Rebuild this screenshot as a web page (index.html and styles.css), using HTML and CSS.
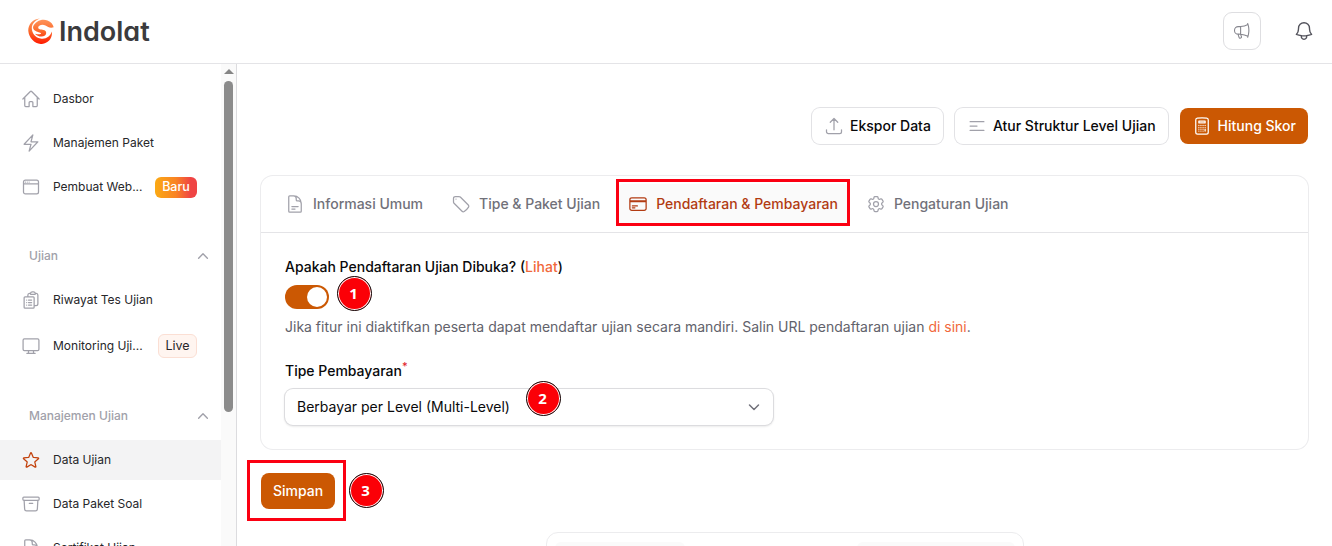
FILE: index.html
```html
<!DOCTYPE html>
<html lang="id">
	<head>
		<meta charset="utf-8">
		<meta name="viewport" content="width=device-width, initial-scale=1">
		<title>Data Ujian - Indolat</title>
		<link rel="stylesheet" href="styles.css">
	</head>
	<body>
		<header class="topbar">
			<a class="logo">
				<svg class="logo-mark" viewBox="0 0 26 26">
					<defs>
						<linearGradient id="flame" gradientUnits="userSpaceOnUse" x1="0" y1="0" x2="0" y2="26">
							<stop offset="0" stop-color="#ff9a62"/>
							<stop offset=".5" stop-color="#fb6b2c"/>
							<stop offset="1" stop-color="#ff1a00"/>
						</linearGradient>
					</defs>
					<g fill="url(#flame)">
						<path d="M12 .5C4 1 0 7 .3 13C1 20 7 26.400 14 26C20 25.500 24.500 21 24 13.500C22 18.500 18 21.500 12.500 20.500C7 19.500 3.800 15 3.800 10C3.800 6 7 2.500 12 .5Z"/>
						<path d="M5 9C7 3.200 14 .5 19.500 2.500C23 3.800 25 6.500 25.700 9.200C22 10.500 20 8.800 17.500 7.500C14 5.800 10 7.500 10.200 9.800C10.500 11.800 14 11.300 16.500 12.300C19.500 13.800 18.500 18.500 13.500 18.600C11 18.700 8.500 17.500 7 15.700C10 16.700 13.500 16.500 13 15.300C12 14 5 14 5 9Z"/>
					</g>
				</svg>
				<span class="logo-text">Indolat</span>
			</a>
			<div class="topbar-actions">
				<button class="announce">
					<svg class="icon" viewBox="0 0 24 24"><path d="M10.340 15.840c-.688-.06-1.386-.09-2.090-.09H7.500a4.500 4.500 0 1 1 0-9h.75c.704 0 1.402-.03 2.090-.09m0 9.180c.253.962.584 1.892.985 2.783.247.550.060 1.210-.463 1.511l-.657.380c-.551.318-1.260.117-1.527-.461a20.845 20.845 0 0 1-1.440-4.282m3.102.069V6.660m0 9.180a23.848 23.848 0 0 1 8.835 2.535M10.340 6.660a23.847 23.847 0 0 0 8.835-2.535m0 0A23.740 23.740 0 0 0 18.795 3m.380 1.125a23.910 23.910 0 0 1 1.014 5.395m-1.014 8.855c-.118.380-.245.754-.380 1.125m.380-1.125a23.910 23.910 0 0 0 1.014-5.395m0-3.460a24.347 24.347 0 0 1 0 3.460"/></svg>
				</button>
				<button class="bell">
					<svg class="icon" viewBox="0 0 24 24"><path d="M14.857 17.082a23.848 23.848 0 0 0 5.454-1.310A8.967 8.967 0 0 1 18 9.750V9A6 6 0 0 0 6 9v.75a8.967 8.967 0 0 1-2.312 6.022c1.733.640 3.560 1.085 5.455 1.310m5.714 0a24.255 24.255 0 0 1-5.714 0m5.714 0a3 3 0 1 1-5.714 0"/></svg>
				</button>
			</div>
		</header>

		<div class="layout">
			<aside class="sidebar">
				<nav class="nav">
					<ul>
						<li class="nav-item">
							<svg class="icon" viewBox="0 0 24 24"><path d="m2.250 12 8.954-8.955c.440-.439 1.152-.439 1.591 0L21.750 12M4.500 9.750v10.125c0 .621.504 1.125 1.125 1.125H9.750v-4.875c0-.621.504-1.125 1.125-1.125h2.250c.621 0 1.125.504 1.125 1.125V21h4.125c.621 0 1.125-.504 1.125-1.125V9.750"/></svg>
							<span class="nav-label">Dasbor</span>
						</li>
						<li class="nav-item">
							<svg class="icon" viewBox="0 0 24 24"><path d="m3.750 13.500 10.500-11.250L12 10.500h8.250L9.750 21.750 12 13.500H3.750Z"/></svg>
							<span class="nav-label">Manajemen Paket</span>
						</li>
						<li class="nav-item">
							<svg class="icon" viewBox="0 0 24 24"><path d="M3 8.250V18a2.250 2.250 0 0 0 2.250 2.250h13.500A2.250 2.250 0 0 0 21 18V8.250m-18 0V6a2.250 2.250 0 0 1 2.250-2.250h13.500A2.250 2.250 0 0 1 21 6v2.250m-18 0h18M5.250 6h.008v.008H5.250V6ZM7.500 6h.008v.008H7.500V6Zm2.250 0h.008v.008H9.750V6Z"/></svg>
							<span class="nav-label">Pembuat Web...</span>
							<span class="badge badge-new">Baru</span>
						</li>
					</ul>
					<div class="nav-group">
						<span>Ujian</span>
						<svg class="icon" viewBox="0 0 24 24"><path d="m4.500 15.750 7.500-7.500 7.500 7.500"/></svg>
					</div>
					<ul>
						<li class="nav-item">
							<svg class="icon" viewBox="0 0 24 24"><path d="M9 12h3.750M9 15h3.750M9 18h3.750m3 .75H18a2.250 2.250 0 0 0 2.250-2.250V6.108c0-1.135-.845-2.098-1.976-2.192a48.424 48.424 0 0 0-1.123-.080m-5.801 0c-.065.210-.100.433-.100.664 0 .414.336.750.750.750h4.500a.750.750 0 0 0 .750-.750 2.250 2.250 0 0 0-.100-.664m-5.800 0A2.251 2.251 0 0 1 13.500 2.250H15c1.012 0 1.867.668 2.150 1.586m-5.800 0c-.376.023-.750.050-1.124.080C9.095 4.010 8.250 4.973 8.250 6.108V8.250m0 0H4.875c-.621 0-1.125.504-1.125 1.125v11.250c0 .621.504 1.125 1.125 1.125h9.750c.621 0 1.125-.504 1.125-1.125V9.375c0-.621-.504-1.125-1.125-1.125H8.250ZM6.750 12h.008v.008H6.750V12Zm0 3h.008v.008H6.750V15Zm0 3h.008v.008H6.750V18Z"/></svg>
							<span class="nav-label">Riwayat Tes Ujian</span>
						</li>
						<li class="nav-item tall">
							<svg class="icon" viewBox="0 0 24 24"><path d="M4 3.500h16a1.500 1.500 0 0 1 1.500 1.500v11a1.500 1.500 0 0 1-1.500 1.500H4A1.500 1.500 0 0 1 2.500 16V5A1.500 1.500 0 0 1 4 3.500ZM9 17.500v3m6-3v3M7 20.700h10"/></svg>
							<span class="nav-label">Monitoring Uji...</span>
							<span class="badge badge-live">Live</span>
						</li>
					</ul>
					<div class="nav-group">
						<span>Manajemen Ujian</span>
						<svg class="icon" viewBox="0 0 24 24"><path d="m4.500 15.750 7.500-7.500 7.500 7.500"/></svg>
					</div>
					<ul>
						<li class="nav-item active">
							<svg class="icon" viewBox="0 0 24 24"><path d="M11.480 3.499a.562.562 0 0 1 1.040 0l2.125 5.111a.563.563 0 0 0 .475.345l5.518.442c.499.040.701.663.321.988l-4.204 3.602a.563.563 0 0 0-.182.557l1.285 5.385a.562.562 0 0 1-.840.610l-4.725-2.885a.562.562 0 0 0-.586 0L6.982 20.540a.562.562 0 0 1-.840-.610l1.285-5.386a.562.562 0 0 0-.182-.557l-4.204-3.602a.562.562 0 0 1 .321-.988l5.518-.442a.563.563 0 0 0 .475-.345L11.480 3.500Z"/></svg>
							<span class="nav-label">Data Ujian</span>
						</li>
						<li class="nav-item">
							<svg class="icon" viewBox="0 0 24 24"><path d="m20.250 7.500-.625 10.632a2.250 2.250 0 0 1-2.247 2.118H6.622a2.250 2.250 0 0 1-2.247-2.118L3.750 7.500M10 11.250h4M3.375 7.500h17.250c.621 0 1.125-.504 1.125-1.125v-1.500c0-.621-.504-1.125-1.125-1.125H3.375c-.621 0-1.125.504-1.125 1.125v1.500c0 .621.504 1.125 1.125 1.125Z"/></svg>
							<span class="nav-label">Data Paket Soal</span>
						</li>
						<li class="nav-item">
							<svg class="icon" viewBox="0 0 24 24"><path d="M19.500 14.250v-2.625a3.375 3.375 0 0 0-3.375-3.375h-1.500A1.125 1.125 0 0 1 13.500 7.125v-1.500a3.375 3.375 0 0 0-3.375-3.375H8.250m2.250 0H5.625c-.621 0-1.125.504-1.125 1.125v17.250c0 .621.504 1.125 1.125 1.125h12.750c.621 0 1.125-.504 1.125-1.125V11.250a9 9 0 0 0-9-9Z"/></svg>
							<span class="nav-label">Sertifikat Ujian</span>
						</li>
					</ul>
				</nav>
				<div class="scrollbar">
					<span class="scroll-arrow"></span>
					<span class="scroll-thumb"></span>
				</div>
			</aside>

			<main class="content">
				<div class="actions">
					<button class="btn">
						<svg class="icon" viewBox="0 0 24 24"><path d="M3 16.500v2.250A2.250 2.250 0 0 0 5.250 21h13.500A2.250 2.250 0 0 0 21 18.750V16.500m-13.500-9L12 3m0 0 4.500 4.500M12 3v13.500"/></svg>
						Ekspor Data
					</button>
					<button class="btn">
						<svg class="icon" viewBox="0 0 24 24"><path d="M3.750 6.750h16.500M3.750 12H12m-8.250 5.250h16.500"/></svg>
						Atur Struktur Level Ujian
					</button>
					<button class="btn btn-primary">
						<svg class="icon" viewBox="0 0 24 24"><path d="M15.750 15.750V18m-7.500-6.750h.008v.008H8.250v-.008Zm0 2.250h.008v.008H8.250V13.500Zm0 2.250h.008v.008H8.250v-.008Zm0 2.250h.008v.008H8.250V18Zm2.498-6.750h.007v.008h-.007v-.008Zm0 2.250h.007v.008h-.007V13.500Zm0 2.250h.007v.008h-.007v-.008Zm0 2.250h.007v.008h-.007V18Zm2.504-6.750h.008v.008h-.008v-.008Zm0 2.250h.008v.008h-.008V13.500Zm0 2.250h.008v.008h-.008v-.008Zm0 2.250h.008v.008h-.008V18Zm2.498-6.750h.008v.008h-.008v-.008Zm0 2.250h.008v.008h-.008V13.500ZM8.250 6h7.500v2.250h-7.500V6ZM12 2.250c-1.892 0-3.758.110-5.593.322C5.307 2.700 4.500 3.650 4.500 4.757V19.500a2.250 2.250 0 0 0 2.250 2.250h10.500a2.250 2.250 0 0 0 2.250-2.250V4.757c0-1.108-.806-2.057-1.907-2.185A48.507 48.507 0 0 0 12 2.250Z"/></svg>
						Hitung Skor
					</button>
				</div>

				<section class="card">
					<nav class="tabs">
						<a class="tab">
							<svg class="icon" viewBox="0 0 24 24"><path d="M19.500 14.250v-2.625a3.375 3.375 0 0 0-3.375-3.375h-1.500A1.125 1.125 0 0 1 13.500 7.125v-1.500a3.375 3.375 0 0 0-3.375-3.375H8.250m0 12.750h7.500m-7.500 3H12M10.500 2.250H5.625c-.621 0-1.125.504-1.125 1.125v17.250c0 .621.504 1.125 1.125 1.125h12.750c.621 0 1.125-.504 1.125-1.125V11.250a9 9 0 0 0-9-9Z"/></svg>
							Informasi Umum
						</a>
						<a class="tab">
							<svg class="icon" viewBox="0 0 24 24"><path d="M9.568 3H5.250A2.250 2.250 0 0 0 3 5.250v4.318c0 .597.237 1.170.659 1.591l9.581 9.581c.699.699 1.780.872 2.607.330a18.095 18.095 0 0 0 5.223-5.223c.542-.827.369-1.908-.330-2.607L11.160 3.660A2.250 2.250 0 0 0 9.568 3ZM6 6h.008v.008H6V6Z"/></svg>
							Tipe &amp; Paket Ujian
						</a>
						<a class="tab active">
							<svg class="icon" viewBox="0 0 24 24"><path d="M2.250 8.250h19.500M2.250 9h19.500m-16.500 5.250h6m-6 2.250h3m-3.750 3h15a2.250 2.250 0 0 0 2.250-2.250V6.750A2.250 2.250 0 0 0 19.500 4.500h-15a2.250 2.250 0 0 0-2.250 2.250v10.500A2.250 2.250 0 0 0 4.500 19.500Z"/></svg>
							Pendaftaran &amp; Pembayaran
						</a>
						<a class="tab">
							<svg class="icon" viewBox="0 0 24 24"><path d="M9.594 3.940c.090-.542.560-.940 1.110-.940h2.593c.550 0 1.020.398 1.110.940l.213 1.281c.063.374.313.686.645.870.074.040.147.083.220.127.325.196.720.257 1.075.124l1.217-.456a1.125 1.125 0 0 1 1.370.490l1.296 2.247a1.125 1.125 0 0 1-.260 1.431l-1.003.827c-.293.241-.438.613-.430.992a7.723 7.723 0 0 1 0 .255c-.008.378.137.750.430.991l1.004.827c.424.350.534.955.260 1.430l-1.298 2.247a1.125 1.125 0 0 1-1.369.491l-1.217-.456c-.355-.133-.750-.072-1.076.124a6.470 6.470 0 0 1-.220.128c-.331.183-.581.495-.644.869l-.213 1.281c-.090.543-.560.940-1.110.940h-2.594c-.550 0-1.019-.398-1.110-.940l-.213-1.281c-.062-.374-.312-.686-.644-.870a6.520 6.520 0 0 1-.220-.127c-.325-.196-.720-.257-1.076-.124l-1.217.456a1.125 1.125 0 0 1-1.369-.490l-1.297-2.247a1.125 1.125 0 0 1 .260-1.431l1.004-.827c.292-.240.437-.613.430-.991a6.932 6.932 0 0 1 0-.255c.007-.380-.138-.751-.430-.992l-1.004-.827a1.125 1.125 0 0 1-.260-1.430l1.297-2.247a1.125 1.125 0 0 1 1.370-.491l1.216.456c.356.133.751.072 1.076-.124.072-.044.146-.086.220-.128.332-.183.582-.495.644-.869l.214-1.280Z"/><path d="M15 12a3 3 0 1 1-6 0 3 3 0 0 1 6 0Z"/></svg>
							Pengaturan Ujian
						</a>
					</nav>
					<div class="card-body">
						<p class="label">Apakah Pendaftaran Ujian Dibuka? (<a class="link">Lihat</a>)</p>
						<button class="toggle" role="switch" aria-checked="true"><span></span></button>
						<p class="helper">Jika fitur ini diaktifkan peserta dapat mendaftar ujian secara mandiri. Salin URL pendaftaran ujian <a class="link">di sini</a>.</p>
						<p class="label label-type">Tipe Pembayaran<sup>*</sup></p>
						<div class="select">
							<span>Berbayar per Level (Multi-Level)</span>
							<svg class="icon" viewBox="0 0 20 20"><path d="m5.500 8 4.500 4.500L14.500 8"/></svg>
						</div>
					</div>
				</section>

				<button class="btn btn-primary btn-save">Simpan</button>

				<div class="bottom-card">
					<span></span>
					<span></span>
				</div>
			</main>
		</div>

		<!-- step markers -->
		<div class="mark mark-tab"></div>
		<div class="mark mark-save"></div>
		<span class="step step-1">1</span>
		<span class="step step-2">2</span>
		<span class="step step-3">3</span>
	</body>
</html>
```

FILE: styles.css
```css
* {
	box-sizing: border-box;
}
body, html {
	margin: 0;
	height: 100%;
	overflow: hidden;
}
body {
	font-family: Inter, "Liberation Sans", sans-serif;
	font-size: 14px;
	line-height: 20px;
	color: #09090b;
	background-color: #fff;
}
p, ul {
	margin: 0;
	padding: 0;
	list-style: none;
}
button {
	font: inherit;
	border: 0;
	padding: 0;
	background: none;
}
.icon {
	width: 20px;
	height: 20px;
	flex: none;
	fill: none;
	stroke: #a1a1aa;
	stroke-width: 1.5;
	stroke-linecap: round;
	stroke-linejoin: round;
}

/* topbar */
.topbar {
	height: 64px;
	display: flex;
	align-items: center;
	justify-content: space-between;
	padding: 0 18px 1px 28px;
	border-bottom: 1px solid #e4e4e7;
}
.logo {
	display: flex;
	align-items: center;
	gap: 5px;
}
.logo-mark {
	width: 26px;
	height: 26px;
}
.logo-text {
	padding-top: 1px;
	font-size: 27px;
	line-height: 30px;
	font-weight: 600;
	color: #3b3b3d;
	font-feature-settings: "cv11";
}
.topbar-actions {
	display: flex;
	align-items: center;
	gap: 32px;
}
.announce {
	width: 38px;
	height: 38px;
	display: flex;
	align-items: center;
	justify-content: center;
	border: 1px solid #dedee1;
	border-radius: 9px;
}
.announce .icon {
	width: 20px;
	height: 20px;
	stroke: #85858d;
	stroke-width: 1.3;
}
.bell {
	display: flex;
}
.bell .icon {
	width: 22px;
	height: 22px;
	margin-right: -1px;
	stroke: #52525b;
}

/* sidebar */
.layout {
	display: flex;
	height: calc(100% - 64px);
}
.sidebar {
	width: 237px;
	flex: none;
	display: flex;
	border-right: 1px solid #dcdcdf;
	overflow: hidden;
}
.nav {
	width: 221px;
	flex: none;
	padding-top: 15px;
	font-size: 12px;
}
.nav ul {
	display: flex;
	flex-direction: column;
	gap: 4px;
}
.nav-item {
	height: 40px;
	flex: none;
	display: flex;
	align-items: center;
	padding: 0 24px 0 21px;
	color: #27272a;
}
.nav-item.tall {
	height: 44px;
}
.nav-item .icon {
	margin-right: 12px;
}
.nav-item.active {
	background-color: #f3f3f4;
}
.nav-item.active .icon {
	stroke: #c2410c;
}
.nav-group {
	height: 20px;
	display: flex;
	align-items: center;
	justify-content: space-between;
	margin: 39px 11px 14px 29px;
	color: #a1a1aa;
	font-weight: 500;
}
.nav-group ~ .nav-group {
	margin-top: 38px;
}
.nav-group .icon {
	width: 14px;
	height: 14px;
	stroke-width: 2.4;
}
.badge {
	margin-left: auto;
	border-radius: 6px;
	text-align: center;
	font-size: 12.5px;
}
.badge-new {
	width: 42px;
	height: 21px;
	color: #fff;
	font-weight: 500;
	background: linear-gradient(90deg, #fbaa14, #f98324 50%, #ef4444 85%);
}
.badge-live {
	width: 39px;
	height: 24px;
	line-height: 22px;
	background-color: #fff5f0;
	border: 1px solid #fbdfd4;
}
.scrollbar {
	width: 15px;
	display: flex;
	flex-direction: column;
	align-items: center;
	background-color: #fafafa;
}
.scroll-arrow {
	margin-top: 5px;
	border: 5px solid transparent;
	border-top: 0;
	border-bottom: 5px solid #858585;
}
.scroll-thumb {
	width: 9px;
	height: 331px;
	margin-top: 7px;
	border-radius: 5px;
	background-color: #8b8b8b;
}

/* content */
.content {
	flex: 1;
	min-width: 0;
	padding: 44px 24px 0;
}
.actions {
	display: flex;
	justify-content: flex-end;
	gap: 12px;
}
.btn {
	height: 36px;
	display: flex;
	align-items: center;
	gap: 6px;
	padding: 0 12px;
	border-radius: 8px;
	color: #09090b;
	font-weight: 500;
	box-shadow: 0 0 0 1px #e2e2e5;
}
.btn-primary {
	color: #fff;
	background-color: #cb5803;
	box-shadow: none;
}
.btn-primary .icon {
	stroke: #fff;
}
.card {
	margin-top: 32px;
	height: 273px;
	border-radius: 12px;
	box-shadow: 0 0 0 1px #ececee;
}
.tabs {
	height: 57px;
	display: flex;
	align-items: center;
	gap: 4px;
	padding: 0 12px;
	border-bottom: 1px solid #e4e4e7;
}
.tab {
	height: 40px;
	display: flex;
	align-items: center;
	gap: 8px;
	padding: 0 12px;
	border-radius: 8px;
	color: #71717a;
	font-weight: 500;
}
.tab.active {
	color: #b23b12;
	background-color: #fafafa;
}
.tab.active .icon {
	stroke: #b23b12;
}
.card-body {
	padding: 24px;
}
.label {
	font-weight: 500;
}
.link {
	color: #f1683b;
}
.toggle {
	width: 44px;
	height: 24px;
	display: flex;
	justify-content: flex-end;
	margin: 8px 0;
	padding: 2px;
	border-radius: 12px;
	background-color: #cb5803;
}
.toggle span {
	width: 20px;
	height: 20px;
	border-radius: 50%;
	background-color: #fff;
}
.helper {
	color: #62626b;
}
.label-type {
	margin-top: 24px;
}
.label-type sup {
	color: #e11d2a;
	font-size: 11px;
	line-height: 0;
}
.select {
	width: 488px;
	height: 36px;
	display: flex;
	align-items: center;
	justify-content: space-between;
	margin-top: 8px;
	padding: 0 9px 0 12px;
	border-radius: 8px;
	box-shadow: 0 0 0 1px #dcdcdf, 0 1px 2px 1px rgba(0, 0, 0, .08);
}
.select .icon {
	stroke: #71717a;
}
.btn-save {
	margin-top: 24px;
}
.bottom-card {
	width: 478px;
	height: 60px;
	display: flex;
	justify-content: space-between;
	margin: 23px auto 0;
	padding: 9px 8px;
	border: 1px solid #ececee;
	border-radius: 12px;
}
.bottom-card span {
	width: 130px;
	height: 36px;
	border-radius: 6px;
	background-color: #fafafa;
}
.bottom-card span:last-child {
	width: 158px;
}

/* step markers lie over the page */
.mark {
	position: absolute;
	border: 3px solid #fb0012;
}
.mark-tab {
	left: 616px;
	top: 179px;
	width: 234px;
	height: 47px;
}
.mark-save {
	left: 247px;
	top: 460px;
	width: 99px;
	height: 61px;
}
.step {
	position: absolute;
	width: 35px;
	height: 35px;
	border: 1.5px solid #141414;
	border-radius: 50%;
	box-shadow: inset 0 0 0 1px #fff;
	background-color: #fb0007;
	color: #fff;
	font: bold 15px/32px "Open Sans", sans-serif;
	text-align: center;
	text-indent: -1px;
}
.step-1 {
	left: 336.5px;
	top: 275.5px;
}
.step-2 {
	left: 525.5px;
	top: 380.5px;
}
.step-3 {
	left: 348.5px;
	top: 472.5px;
}
```
